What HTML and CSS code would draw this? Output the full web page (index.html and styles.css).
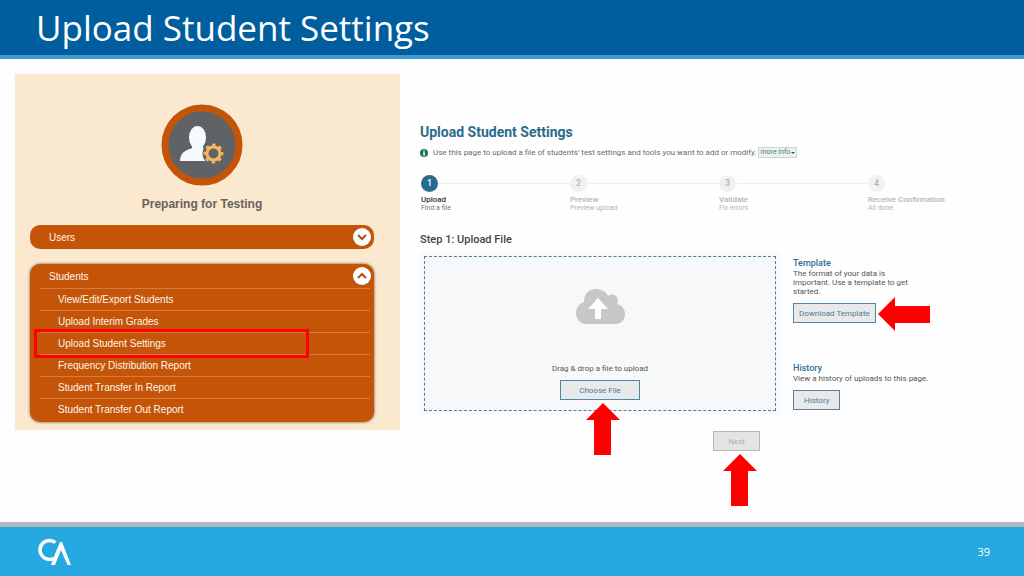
FILE: index.html
```html
<!DOCTYPE html>
<html lang="en">
<head>
<meta charset="utf-8">
<meta name="viewport" content="width=device-width, initial-scale=1">
<title>Upload Student Settings</title>
<link rel="stylesheet" href="styles.css">
</head>
<body>
<header class="slide-header"><h1>Upload Student Settings</h1></header>
<main class="slide-main">
  <nav class="menu" aria-label="Preparing for Testing">
    <svg class="menu-icon" viewBox="0 0 82 82" aria-hidden="true">
      <circle cx="41" cy="41" r="37" fill="#606365" stroke="#c35408" stroke-width="7"/>
      <path d="M19 57c0-8 5-11 13-13h9c6 1 9 4 10 13z" fill="#f8fbfd"/>
      <path d="M31 38h11v8l-5 2-6-2z" fill="#f8fbfd"/>
      <ellipse cx="36.500" cy="33.500" rx="8.500" ry="11.500" fill="#f8fbfd"/>
      <circle cx="52.500" cy="49.500" r="11" fill="#606365"/>
      <circle cx="52.500" cy="49.500" r="6.500" fill="none" stroke="#f5b660" stroke-width="3"/>
      <circle cx="52.500" cy="49.500" r="8.500" fill="none" stroke="#f5b660" stroke-width="3" stroke-dasharray="3.338 3.338" stroke-dashoffset="1.669"/>
    </svg>
    <h2 class="menu-title">Preparing for Testing</h2>
    <section class="group">
      <button class="group-head" type="button" aria-expanded="false">Users
        <svg viewBox="0 0 18 18" aria-hidden="true"><circle cx="9" cy="9" r="9" fill="#fff"/><path d="M5 7l4 4 4-4" fill="none" stroke="#a8501c" stroke-width="2"/></svg>
      </button>
    </section>
    <section class="group group-open">
      <button class="group-head" type="button" aria-expanded="true">Students
        <svg viewBox="0 0 18 18" aria-hidden="true"><circle cx="9" cy="9" r="9" fill="#fff"/><path d="M5 11l4-4 4 4" fill="none" stroke="#a8501c" stroke-width="2"/></svg>
      </button>
      <ul class="links">
        <li><a href="#">View/Edit/Export Students</a></li>
        <li><a href="#">Upload Interim Grades</a></li>
        <li class="marked"><a href="#">Upload Student Settings</a></li>
        <li><a href="#">Frequency Distribution Report</a></li>
        <li><a href="#">Student Transfer In Report</a></li>
        <li><a href="#">Student Transfer Out Report</a></li>
      </ul>
    </section>
  </nav>
  <section class="upload">
    <h2 class="upload-title">Upload Student Settings</h2>
    <p class="info">
      <svg viewBox="0 0 8 8" aria-hidden="true"><circle cx="4" cy="4" r="4" fill="#197a50"/><path d="M3.300 1.300h1.400v1.200H3.300zM3 3.200h1.800v2.600h.5v.8H2.900v-.8h.5V4H3z" fill="#fff"/></svg>
      <span>Use this page to upload a file of students' test settings and tools you want to add or modify.</span>
      <button class="more" type="button">more info <i class="caret"></i></button>
    </p>
    <ol class="steps">
      <li class="current"><span class="num">1</span><strong>Upload</strong><small>Find a file</small></li>
      <li><span class="num">2</span><strong>Preview</strong><small>Preview upload</small></li>
      <li><span class="num">3</span><strong>Validate</strong><small>Fix errors</small></li>
      <li><span class="num">4</span><strong>Receive Confirmation</strong><small>All done</small></li>
    </ol>
    <h3 class="step-title">Step 1: Upload File</h3>
    <div class="work">
      <div class="work-main">
        <div class="drop-wrap">
          <div class="drop">
            <svg class="cloud" viewBox="0 0 49 35" aria-hidden="true"><path d="M11 35C4 35 0 30 0 24c0-5 3-9 8-11C8 5 13 0 20 0c6 0 10 3 12 7 4-3 10-1 10 5 0 1 0 2-1 3 5 1 8 5 8 10 0 6-4 10-10 10z" fill="#c6c7c8"/><path d="M22 9l10 11h-7v10h-6V20h-7z" fill="#fff"/></svg>
            <p class="drop-text">Drag &amp; drop a file to upload</p>
            <div class="anchor"><button class="btn btn-choose" type="button">Choose File</button>
              <svg class="arrow arrow-up" viewBox="0 0 34 52" aria-hidden="true"><path d="M17 0l17 17h-9v35H8V17H0z" fill="#f00"/></svg></div>
          </div>
        </div>
        <div class="next-row"><div class="anchor"><button class="btn btn-next" type="button" disabled>Next</button>
          <svg class="arrow arrow-up" viewBox="0 0 34 52" aria-hidden="true"><path d="M17 0l17 17h-9v35H8V17H0z" fill="#f00"/></svg></div></div>
      </div>
      <aside class="side">
        <section class="side-template">
          <h4>Template</h4>
          <p>The format of your data is important. Use a template to get started.</p>
          <div class="anchor"><button class="btn btn-template" type="button">Download Template</button>
            <svg class="arrow arrow-left" viewBox="0 0 52 34" aria-hidden="true"><path d="M0 17L17 0v9h35v17H17v8z" fill="#f00"/></svg></div>
        </section>
        <section>
          <h4>History</h4>
          <p>View a history of uploads to this page.</p>
          <button class="btn btn-history" type="button">History</button>
        </section>
      </aside>
    </div>
  </section>
</main>
<footer class="slide-footer">
  <svg class="logo" viewBox="0 0 34 28" role="img" aria-label="CA logo"><path d="M17.500 4.500A9.500 9.500 0 1 0 15.500 20.500" fill="none" stroke="#fff" stroke-width="3.500"/><path d="M13 27h4l6-15 6.500 15H33L24 4h-2l-7.500 18z" fill="#fff"/></svg>
  <span>39</span>
</footer>
</body>
</html>
```
FILE: styles.css
```css
* { box-sizing: border-box; }
body {
  margin: 0;
  min-height: 100vh;
  display: flex;
  flex-direction: column;
  background: #fefefe;
  font-family: Roboto, "Liberation Sans", sans-serif;
  font-size: 8px;
  line-height: 9px;
  color: #555;
}
h1, h2, h3, h4, p, ul, ol { margin: 0; padding: 0; }
ul, ol { list-style: none; }
button { font: inherit; cursor: pointer; }
svg { display: block; flex: none; }

.slide-header {
  padding: 6px 36px 5px;
  background: #005e9e;
  border-bottom: 4px solid #3c9bd1;
}
.slide-header h1 {
  font: 500 35px/44px "Open Sans", "Noto Sans", sans-serif;
  color: #fff;
}

.slide-main {
  flex: 1;
  display: grid;
  grid-template-columns: 385fr 604fr;
  align-items: start;
  gap: 20px;
  padding: 15px 0 15px 15px;
}

.menu {
  padding: 30px 26px 8px 15px;
  background: #fae8cf;
  font-family: "Liberation Sans", Arial, sans-serif;
}
.menu-icon { width: 82px; height: 82px; margin: 0 auto; }
.menu-title {
  margin: 10px 0 13px;
  font-size: 12px;
  line-height: 16px;
  text-align: center;
  color: #6b625b;
}
.group {
  border-radius: 10px;
  background: #c35408;
}
.group + .group { margin-top: 15px; }
.group-open { padding-bottom: 2px; box-shadow: 0 0 3px #6b4a34; }
.group-head {
  display: flex;
  align-items: center;
  justify-content: space-between;
  width: 100%;
  height: 24px;
  padding: 0 3px 0 19px;
  border: 0;
  background: none;
  color: #fff4e8;
  font-size: 10px;
  text-align: left;
}
.group-head svg { width: 18px; height: 18px; }
.links { padding: 0 4px 0 10px; }
.links li { position: relative; border-top: 1px solid #d97b3c; }
.links a {
  display: block;
  padding-left: 18px;
  font-size: 10px;
  line-height: 21px;
  color: #fff4e8;
  text-decoration: none;
}
.marked::after {
  content: "";
  position: absolute;
  inset: -4px 61px -4px -6px;
  border: 3px solid #f00;
  pointer-events: none;
  z-index: 1;
}

.upload { padding-top: 50px; }
.upload-title { font-size: 14px; line-height: 16px; color: #2a6a8e; }
.info { display: flex; align-items: center; margin-top: 7px; color: #6b6b6b; }
.info svg { width: 8px; height: 8px; margin-right: 5px; }
.more {
  display: flex;
  align-items: center;
  gap: 1px;
  height: 11px;
  margin-left: 2px;
  padding: 0 1px;
  border: 1px solid #c9d3cf;
  background: #edf3f0;
  color: #4e7a68;
  font-size: 7px;
}
.caret { border: 2px solid transparent; border-top-color: #33524a; border-bottom: 0; }

.steps { display: grid; grid-template-columns: repeat(4, 149px); margin: 17px 0 0 1px; }
.steps li { position: relative; display: flex; flex-direction: column; color: #b4b4b4; }
.steps li:not(:last-child)::before {
  content: "";
  position: absolute;
  top: 8px;
  left: 18px;
  right: 0;
  border-top: 1px solid #ededed;
}
.num {
  width: 17px;
  height: 17px;
  border-radius: 50%;
  background: #f1f1f1;
  font-size: 9px;
  font-weight: 500;
  line-height: 17px;
  text-align: center;
}
.steps strong { margin-top: 3px; font-weight: 500; }
.steps small { font-size: 7px; }
.current .num { background: #2a6a8e; color: #fff; }
.steps .current strong { color: #333; }
.steps .current small { color: #777; }

.step-title { margin-top: 20px; font-size: 11px; line-height: 14px; font-weight: 500; color: #444; }

.work { display: grid; grid-template-columns: 360fr 231fr; gap: 13px; margin-top: 5px; }
.drop-wrap { padding: 4px; background: #f8fafc; }
.drop {
  display: flex;
  flex-direction: column;
  align-items: center;
  padding: 32px 0 10px;
  border: 1px dashed #4b7f9c;
  background: #f7f8f9;
}
.cloud { width: 49px; height: 35px; }
.drop-text { margin: 40px 0 7px; color: #4f5a58; }
.anchor { position: relative; width: max-content; }
.btn {
  display: block;
  height: 20px;
  padding: 0 10px;
  border: 1px solid #5585a3;
  background: #e8e9ea;
  color: #4d7a96;
}
.btn-choose { padding: 0 18px; }
.btn-template { padding: 0 5px; }
.btn-next { padding: 0 14px; border-color: #b5b5b5; background: #e4e4e4; color: #b0b0b0; }
.arrow { position: absolute; z-index: 1; }
.arrow-up { width: 34px; height: 52px; left: 50%; margin-left: -14px; top: 100%; margin-top: 3px; }
.arrow-left { width: 52px; height: 34px; left: 100%; margin-left: 2px; top: -6px; }
.next-row { display: flex; justify-content: flex-end; padding: 16px 20px 0 0; }

.side { padding-top: 5px; color: #555; }
.side h4 { font-size: 9px; line-height: 12px; font-weight: 500; color: #2f6f97; }
.side p { max-width: 140px; margin-bottom: 7px; }
.side-template { margin-bottom: 39px; }
.side .side-template p { max-width: 118px; }

.slide-footer {
  display: flex;
  align-items: center;
  justify-content: space-between;
  height: 54px;
  padding: 0 34px 0 38px;
  border-top: 5px solid #b5b8c2;
  background: #25a9e0;
  color: #fff;
  font: 11px/16px "Open Sans", "Noto Sans", sans-serif;
}
.logo { width: 34px; height: 28px; }
```
